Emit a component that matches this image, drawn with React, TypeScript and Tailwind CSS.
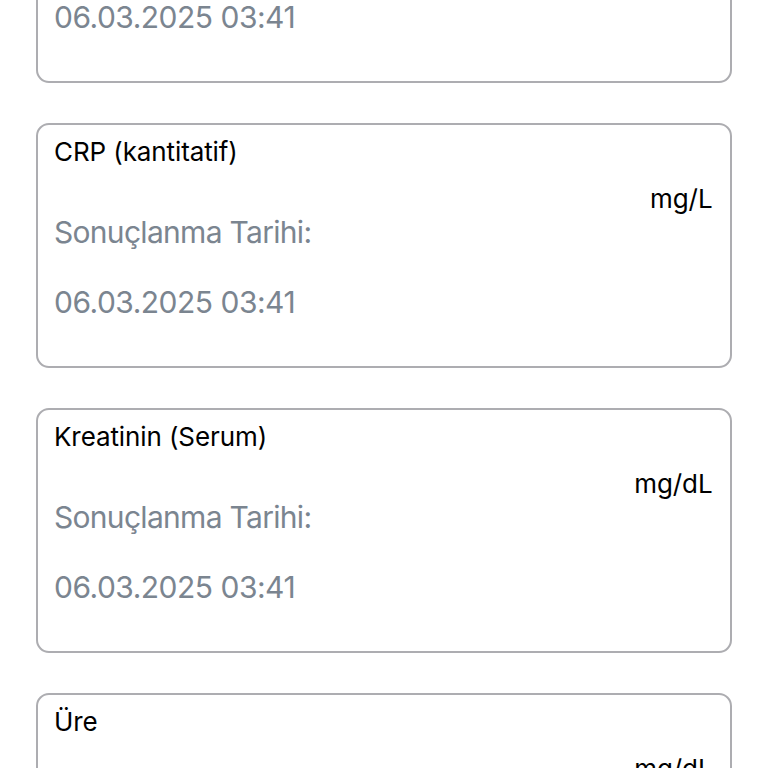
import React from "react";

type Item = { name: string; unit: string };

const items: Item[] = [
  { name: "Hemoglobin", unit: "g/dL" },
  { name: "CRP (kantitatif)", unit: "mg/L" },
  { name: "Kreatinin (Serum)", unit: "mg/dL" },
  { name: "Üre", unit: "mg/dL" },
];

function Card({ item }: { item: Item }) {
  return (
    <div className="h-[245px] rounded-[13px] border-2 border-[#adadb1] bg-white pl-[16px] pr-[17.5px] pt-[12px]">
      <div className="text-[26px] leading-[30px] tracking-[-0.1px] text-black">{item.name}</div>
      <div className="mt-[17px] text-right text-[26px] leading-[30px] tracking-[-0.1px] text-black">{item.unit}</div>
      <div className="text-[30px] leading-[36px] tracking-[-0.7px] text-[#7b8590]">Sonuçlanma Tarihi:</div>
      <div className="mt-[34px] text-[30px] leading-[36px] tracking-[-0.5px] text-[#7b8590]">06.03.2025 03:41</div>
    </div>
  );
}

export default function App() {
  return (
    <div
      className="h-[768px] w-[768px] overflow-hidden bg-white"
      style={{ fontFamily: 'Inter, "Noto Sans", sans-serif' }}
    >
      <div className="mx-[36px] mt-[-162px] flex flex-col gap-[40px]">
        {items.map((it, i) => (
          <Card key={i} item={it} />
        ))}
      </div>
    </div>
  );
}
